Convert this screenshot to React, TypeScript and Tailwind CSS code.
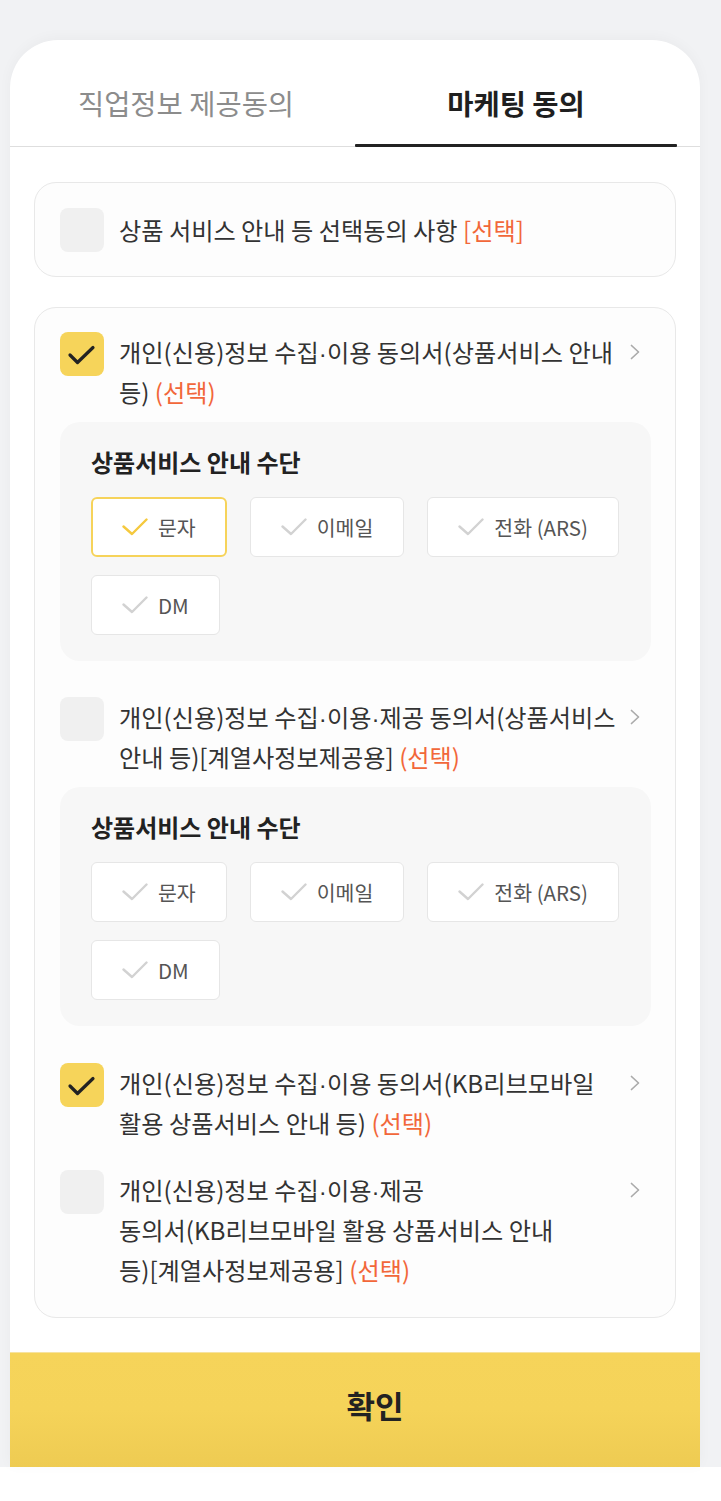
import React from "react";

const font = "font-['Noto_Sans_CJK_KR','Noto_Sans',sans-serif]";

function MainCheck({ checked }: { checked: boolean }) {
  return (
    <div
      className={
        "w-[44px] h-[44px] shrink-0 rounded-[8px] flex items-center justify-center " +
        (checked ? "bg-[#f6d45a]" : "bg-[#f0f0f0]")
      }
    >
      {checked && (
        <svg width="44" height="44" viewBox="0 0 44 44" fill="none">
          <path
            d="M10 23 L17.5 30.5 L33 15.5"
            stroke="#222222"
            strokeWidth="3.2"
            strokeLinecap="round"
            strokeLinejoin="round"
          />
        </svg>
      )}
    </div>
  );
}

function Chevron() {
  return (
    <svg width="10" height="16" viewBox="0 0 10 16" fill="none" className="shrink-0">
      <path
        d="M1.5 1.5 L8.5 8 L1.5 14.5"
        stroke="#ababab"
        strokeWidth="1.7"
        strokeLinecap="round"
        strokeLinejoin="round"
      />
    </svg>
  );
}

function SmallCheck({ on }: { on: boolean }) {
  return (
    <svg width="26" height="18" viewBox="0 0 26 18" fill="none" className="shrink-0">
      <path
        d="M1.5 8.5 L10 16 L24.5 1.5"
        stroke={on ? "#f5c93e" : "#d2d2d2"}
        strokeWidth="2.4"
        strokeLinecap="round"
        strokeLinejoin="round"
      />
    </svg>
  );
}

function Option({ label, on }: { label: string; on?: boolean }) {
  return (
    <div
      className={
        "h-[60px] flex items-center gap-[10px] bg-white rounded-[6px] " +
        (on ? "border-2 border-[#f6d35a] px-[29px]" : "border border-[#e6e6e6] px-[30px]")
      }
    >
      <SmallCheck on={!!on} />
      <span className="text-[20.5px] text-[#555555] leading-none">{label}</span>
    </div>
  );
}

function MethodBox({ first }: { first?: boolean }) {
  return (
    <div className="mt-[8px] mr-[-11px] rounded-[20px] bg-[#f7f7f7] pt-[25px] pb-[26px] pl-[31px] pr-[24px]">
      <div className="text-[24px] font-bold text-[#222222] leading-[30px]">
        상품서비스 안내 수단
      </div>
      <div className="mt-[20px] flex flex-wrap gap-x-[23px] gap-y-[18px]">
        <Option label="문자" on={first} />
        <Option label="이메일" />
        <Option label="전화 (ARS)" />
        <Option label="DM" />
      </div>
    </div>
  );
}

function Word({ w }: { w: string }) {
  const parts = w.split("·");
  return (
    <span className="whitespace-nowrap">
      {parts.map((p, i) => (
        <React.Fragment key={i}>
          {p}
          {i < parts.length - 1 && (
            <span className="font-['Liberation_Sans',sans-serif] leading-[0px]">·</span>
          )}
        </React.Fragment>
      ))}
    </span>
  );
}

function ConsentRow({ checked, text }: { checked: boolean; text: string }) {
  const words = text.split(" ");
  return (
    <div className="flex items-start">
      <MainCheck checked={checked} />
      <div className="w-[507px] ml-[15px] mb-[2px] text-[24.2px] leading-[40px] text-[#333333]">
        {words.map((w, i) => (
          <React.Fragment key={i}>
            <Word w={w} />{" "}
          </React.Fragment>
        ))}
        <span className="whitespace-nowrap text-[#f2673a]">(선택)</span>
      </div>
      <div className="ml-auto mt-[12px]">
        <Chevron />
      </div>
    </div>
  );
}

export default function App() {
  return (
    <div className={"min-h-[1501px] bg-white " + font}>
      <div className="bg-[#f1f2f4] pt-[40px] pl-[10px] pr-[21px]">
        <div className="bg-white rounded-t-[48px] shadow-[0_-2px_14px_rgba(0,0,0,0.035)]">
          {/* Tabs */}
          <div className="border-b border-[#dedede] grid grid-cols-2 pl-[23px] pr-[23px]">
            <div className="h-[106px] pt-[20px] flex items-center justify-center pr-[16px] text-[28.5px] text-[#8c8c8c]">
              직업정보 제공동의
            </div>
            <div className="h-[106px] pt-[20px] flex items-center justify-center text-[28.5px] font-bold text-[#1f1f1f] relative">
              마케팅 동의
              <div className="absolute left-0 right-0 bottom-[-1px] h-[3px] bg-[#222222] rounded-[1px]" />
            </div>
          </div>

          <div className="px-[24px] pt-[35px] pb-[34px]">
            {/* Card 1 */}
            <div className="h-[95px] rounded-[22px] border border-[#e8e8e8] bg-[#fdfdfd] pl-[25px] flex items-center">
              <MainCheck checked={false} />
              <div className="ml-[15px] text-[24.2px] text-[#333333] leading-[40px]">
                상품 서비스 안내 등 선택동의 사항 <span className="text-[#f2673a]">[선택]</span>
              </div>
            </div>

            {/* Card 2 */}
            <div className="mt-[30px] rounded-[22px] border border-[#e8e8e8] bg-[#fdfdfd] pt-[24px] pb-[25px] pl-[25px] pr-[35px]">
              <ConsentRow checked={true} text="개인(신용)정보 수집·이용 동의서(상품서비스 안내 등)" />
              <MethodBox first />
              <div className="mt-[36px]">
                <ConsentRow
                  checked={false}
                  text="개인(신용)정보 수집·이용·제공 동의서(상품서비스 안내 등)[계열사정보제공용]"
                />
              </div>
              <MethodBox />
              <div className="mt-[37px]">
                <ConsentRow
                  checked={true}
                  text="개인(신용)정보 수집·이용 동의서(KB리브모바일 활용 상품서비스 안내 등)"
                />
              </div>
              <div className="mt-[25px]">
                <ConsentRow
                  checked={false}
                  text="개인(신용)정보 수집·이용·제공 동의서(KB리브모바일 활용 상품서비스 안내 등)[계열사정보제공용]"
                />
              </div>
            </div>
          </div>

          {/* Confirm button */}
          <div className="h-[115px] border-t border-[#f7e3a0] bg-linear-to-b from-[#f6d45a] via-[#f5d359] to-[#eecb52] flex items-center justify-center pl-[40px] pb-[10px]">
            <span className="text-[31px] font-bold text-[#222222]">확인</span>
          </div>
        </div>
      </div>
    </div>
  );
}
